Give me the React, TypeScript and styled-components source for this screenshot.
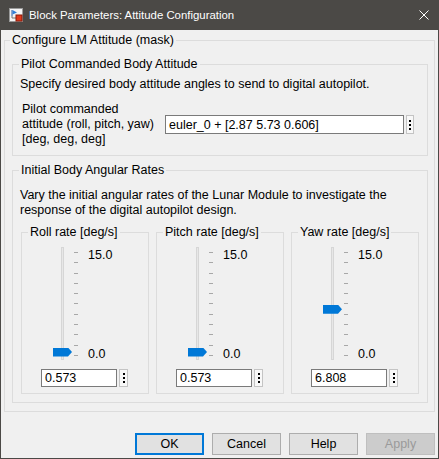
import React from 'react';
import styled, { createGlobalStyle } from 'styled-components';

const GlobalStyle = createGlobalStyle`
  html, body {
    margin: 0;
    padding: 0;
  }
  body {
    width: 439px;
    height: 459px;
    overflow: hidden;
    font-family: "Liberation Sans", Arial, sans-serif;
    font-size: 12.5px;
    color: #000;
  }
`;

const Window = styled.div`
  width: 439px;
  height: 459px;
  box-sizing: border-box;
  border: 1px solid #4b4946;
  border-top: none;
  background: #f0f0f0;
  display: flex;
  flex-direction: column;
`;

const TitleBar = styled.div`
  height: 30px;
  background: #4b4946;
  display: flex;
  align-items: center;
  padding-left: 8px;
  color: #fff;
  font-size: 11.4px;
`;

const TitleText = styled.span`
  margin-left: 6px;
  flex: 1;
`;

const CloseBox = styled.div`
  width: 30px;
  height: 30px;
  display: flex;
  align-items: center;
  justify-content: center;
  margin-right: -1px;
`;

const Body = styled.div`
  flex: 1;
  display: flex;
  flex-direction: column;
  padding: 2px 3px 0;
`;

const Group = styled.fieldset<{ $w?: number }>`
  margin: 0;
  padding: 0;
  min-width: 0;
  border: 1px solid #dcdcdc;
  ${(p) => (p.$w ? `width: ${p.$w}px; box-sizing: border-box;` : '')}
`;

const Legend = styled.legend<{ $indent?: number }>`
  margin-left: ${(p) => p.$indent ?? 6}px;
  padding: 0 2px;
  line-height: 16px;
`;

const OuterContent = styled.div`
  padding: 0 6px 8px 7px;
  display: flex;
  flex-direction: column;
`;

const SectionGroup = styled(Group)<{ $top: number }>`
  margin-top: ${(p) => p.$top}px;
`;

const Desc = styled.p<{ $top: number }>`
  margin: ${(p) => p.$top}px 0 0 7px;
  line-height: 15px;
`;

const ParamRow = styled.div`
  display: flex;
  align-items: center;
  margin: 10px 0 8px 9px;
`;

const ParamLabel = styled.div`
  width: 143px;
  line-height: 15px;
`;

const InputGroup = styled.div`
  display: flex;
  gap: 2px;
`;

const TextBox = styled.div<{ $w: number; $h: number }>`
  width: ${(p) => p.$w}px;
  height: ${(p) => p.$h}px;
  box-sizing: border-box;
  border: 1px solid #7a7a7a;
  background: #fff;
  padding: 0 3px;
  display: flex;
  align-items: center;
  white-space: nowrap;
`;

const MenuButton = styled.div<{ $w: number; $h: number }>`
  width: ${(p) => p.$w}px;
  height: ${(p) => p.$h}px;
  box-sizing: border-box;
  border: 1px solid #c4c4c4;
  background: #f8f8f8;
  display: flex;
  flex-direction: column;
  align-items: center;
  justify-content: center;
  gap: 2px;
`;

const Dot = styled.span`
  width: 2px;
  height: 2px;
  background: #000;
`;

const SliderRow = styled.div`
  display: flex;
  gap: 7px;
  margin: 6px 0 8px 8px;
`;

const SliderArea = styled.div`
  display: flex;
  margin: 7px 0 0 31px;
`;

const TrackWrap = styled.div`
  position: relative;
  width: 19px;
  height: 113px;
`;

const Track = styled.div`
  margin-left: 8px;
  width: 3px;
  height: 100%;
  box-sizing: border-box;
  background: #e7e7e7;
  border: 1px solid #d6d6d6;
`;

const Thumb = styled.div`
  position: absolute;
  left: 0;
  width: 19px;
  height: 9px;
  background: #0078d7;
  clip-path: polygon(0 0, 15px 0, 19px 50%, 15px 100%, 0 100%);
`;

const Ticks = styled.div`
  margin: 5px 0 0 2px;
  height: 104px;
  display: flex;
  flex-direction: column;
  justify-content: space-between;
`;

const Tick = styled.span`
  width: 4px;
  height: 1px;
  background: #a8a8a8;
`;

const TickLabels = styled.div`
  margin-left: 10px;
  height: 115px;
  box-sizing: border-box;
  padding-top: 1px;
  display: flex;
  flex-direction: column;
  justify-content: space-between;
  line-height: 15px;
`;

const RateInputRow = styled(InputGroup)`
  margin: 7px 0 6px 19px;
`;

const ButtonBar = styled.div`
  display: flex;
  justify-content: flex-end;
  gap: 8px;
  margin-top: 21px;
`;

const Button = styled.div<{ $default?: boolean; $disabled?: boolean }>`
  width: 69px;
  height: 22px;
  box-sizing: border-box;
  display: flex;
  align-items: center;
  justify-content: center;
  background: ${(p) => (p.$disabled ? '#cccccc' : '#e1e1e1')};
  border: ${(p) =>
    p.$default ? '2px solid #0078d7' : p.$disabled ? '1px solid #bfbfbf' : '1px solid #adadad'};
  color: ${(p) => (p.$disabled ? '#9a9a9a' : '#000')};
`;

function BlockIcon() {
  return (
    <svg width="14" height="14" viewBox="0 0 14 14">
      <rect x="0.5" y="0.5" width="13" height="13" fill="#f4f4f4" stroke="#9a9a9a" />
      <path d="M3 2 L3 8" stroke="#2b5fa8" strokeWidth="1" />
      <path d="M3.5 2 L8 4.5 L3.5 6.5 Z" fill="#2f7fd8" />
      <path d="M3 8 L3 10 L7 10" stroke="#777" fill="none" strokeWidth="1" />
      <rect x="7" y="7" width="6" height="6" fill="#e03a1c" stroke="#8a1a08" strokeWidth="1" />
    </svg>
  );
}

function CloseIcon() {
  return (
    <svg width="10" height="10" viewBox="0 0 10 10">
      <path d="M0.5 0.5 L9.5 9.5 M9.5 0.5 L0.5 9.5" stroke="#fff" strokeWidth="1" />
    </svg>
  );
}

function Menu({ w, h }: { w: number; h: number }) {
  return (
    <MenuButton $w={w} $h={h}>
      <Dot />
      <Dot />
      <Dot />
    </MenuButton>
  );
}

type Rate = { label: string; value: number; text: string };

const rates: Rate[] = [
  { label: 'Roll rate [deg/s]', value: 0.573, text: '0.573' },
  { label: 'Pitch rate [deg/s]', value: 0.573, text: '0.573' },
  { label: 'Yaw rate [deg/s]', value: 6.808, text: '6.808' },
];

function RateSlider({ rate }: { rate: Rate }) {
  const center = 109 - (rate.value / 15) * 103;
  return (
    <Group $w={128}>
      <Legend>{rate.label}</Legend>
      <SliderArea>
        <TrackWrap>
          <Track />
          <Thumb style={{ top: center - 4.5 }} />
        </TrackWrap>
        <Ticks>
          {Array.from({ length: 11 }).map((_, i) => (
            <Tick key={i} />
          ))}
        </Ticks>
        <TickLabels>
          <span>15.0</span>
          <span>0.0</span>
        </TickLabels>
      </SliderArea>
      <RateInputRow>
        <TextBox $w={76} $h={18}>{rate.text}</TextBox>
        <Menu w={9} h={18} />
      </RateInputRow>
    </Group>
  );
}

export default function App() {
  return (
    <>
      <GlobalStyle />
      <Window>
        <TitleBar>
          <BlockIcon />
          <TitleText>Block Parameters: Attitude Configuration</TitleText>
          <CloseBox>
            <CloseIcon />
          </CloseBox>
        </TitleBar>
        <Body>
          <Group>
            <Legend $indent={5}>Configure LM Attitude (mask)</Legend>
            <OuterContent>
              <SectionGroup $top={8}>
                <Legend>Pilot Commanded Body Attitude</Legend>
                <Desc $top={5}>Specify desired body attitude angles to send to digital autopilot.</Desc>
                <ParamRow>
                  <ParamLabel>
                    Pilot commanded
                    <br />
                    attitude (roll, pitch, yaw)
                    <br />
                    [deg, deg, deg]
                  </ParamLabel>
                  <InputGroup>
                    <TextBox $w={239} $h={19}>euler_0 + [2.87 5.73 0.606]</TextBox>
                    <Menu w={8} h={19} />
                  </InputGroup>
                </ParamRow>
              </SectionGroup>
              <SectionGroup $top={6}>
                <Legend>Initial Body Angular Rates</Legend>
                <Desc $top={10}>
                  Vary the initial angular rates of the Lunar Module to investigate the
                  <br />
                  response of the digital autopilot design.
                </Desc>
                <SliderRow>
                  {rates.map((r) => (
                    <RateSlider key={r.label} rate={r} />
                  ))}
                </SliderRow>
              </SectionGroup>
            </OuterContent>
          </Group>
          <ButtonBar>
            <Button $default>OK</Button>
            <Button>Cancel</Button>
            <Button>Help</Button>
            <Button $disabled>Apply</Button>
          </ButtonBar>
        </Body>
      </Window>
    </>
  );
}
